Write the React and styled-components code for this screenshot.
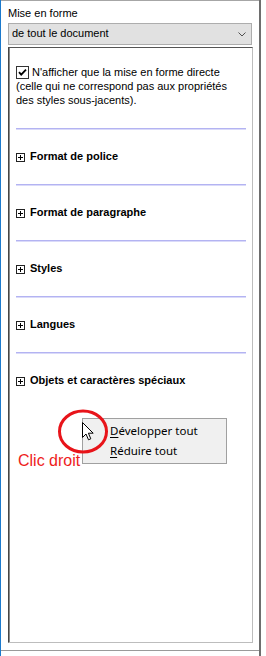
import React from "react";
import styled, { createGlobalStyle } from "styled-components";

const Global = createGlobalStyle`
  html, body { margin: 0; padding: 0; background: #ffffff; }
  body { font-family: "Liberation Sans", Arial, sans-serif; color: #000; }
`;

const Frame = styled.div`
  position: relative;
  box-sizing: border-box;
  width: 261px;
  height: 656px;
  border-left: 1px solid #1b79cc;
  border-right: 2px solid #6e6e6e;
`;

const Panel = styled.div`
  box-sizing: border-box;
  height: 651px;
  border-top: 1px solid #a6a6a6;
  border-bottom: 1px solid #9a9a9a;
  padding: 6px 6px 0 7px;
  display: flex;
  flex-direction: column;
`;

const Label = styled.div`
  font-size: 11px;
  line-height: 13px;
  height: 13px;
  white-space: nowrap;
`;

const Select = styled.div`
  box-sizing: border-box;
  margin-top: 3px;
  margin-right: 1px;
  height: 22px;
  border: 1px solid #adadad;
  background: #e1e1e1;
  padding: 0 3px;
  display: flex;
  align-items: flex-start;
  font-size: 11px;
  line-height: 18px;
`;

const Chevron = styled.svg`
  margin: 8px 2px 0 auto;
  display: block;
`;

const Box = styled.div`
  box-sizing: border-box;
  margin-top: 2px;
  height: 596px;
  border-top: 1px solid #555555;
  border-left: 1px solid #454545;
  border-right: 1px solid #bdbdbd;
  border-bottom: 1px solid #bdbdbd;
  box-shadow: inset 1px 0 0 #8a8a8a;
  padding: 17px 6px 0 7px;
`;

const CheckText = styled.div`
  font-size: 11px;
  line-height: 14px;
  white-space: nowrap;
`;

const CheckBox = styled.svg`
  float: left;
  margin: 1px 3px 0 0;
  display: block;
`;

const Separator = styled.div`
  margin-top: ${(p) => p.$top}px;
  height: 2px;
  border-top: 1px solid #b3b3f2;
  box-sizing: border-box;
  background: #dadaf9;
`;

const Header = styled.div`
  margin: 19px 0 21px;
  height: 14px;
  display: flex;
  align-items: flex-start;
  font-size: 11px;
  line-height: 14px;
  font-weight: bold;
  white-space: nowrap;
`;

const PlusIcon = styled.svg`
  display: block;
  margin: 4px 5px 0 0;
  flex: none;
`;

const Menu = styled.div`
  position: absolute;
  left: 81px;
  top: 418px;
  box-sizing: border-box;
  width: 145px;
  height: 46px;
  border: 1px solid #a0a0a0;
  background: #f0f0f0;
  padding: 1.5px 0 0 27px;
  font-family: "Noto Sans", "Liberation Sans", sans-serif;
  font-size: 11.5px;
  line-height: 20px;
  color: #000;
`;

const MenuItem = styled.div`
  height: 20px;
  white-space: nowrap;
  u {
    text-decoration: underline;
    text-underline-offset: 1.5px;
    text-decoration-thickness: 1px;
  }
`;

const Ring = styled.svg`
  position: absolute;
  left: 56px;
  top: 409px;
  display: block;
`;

const Cursor = styled.svg`
  position: absolute;
  left: 81px;
  top: 422px;
  display: block;
`;

const Note = styled.div`
  position: absolute;
  left: 17px;
  top: 452px;
  font-family: "Liberation Sans", Arial, sans-serif;
  font-size: 16px;
  line-height: 18px;
  color: #ee1c1c;
  white-space: nowrap;
`;

const sections = [
  "Format de police",
  "Format de paragraphe",
  "Styles",
  "Langues",
  "Objets et caractères spéciaux",
];

function Plus() {
  return (
    <PlusIcon width="9" height="9" viewBox="0 0 9 9">
      <rect x="0.5" y="0.5" width="8" height="8" fill="#fff" stroke="#222" />
      <path d="M2 4.5H7M4.5 2V7" stroke="#000" strokeWidth="1" />
    </PlusIcon>
  );
}

export default function App() {
  return (
    <>
      <Global />
      <Frame>
        <Panel>
          <Label>Mise en forme</Label>
          <Select>
            <span>de tout le document</span>
            <Chevron width="8" height="5" viewBox="0 0 8 5">
              <path d="M0.5 0.5L4 4L7.5 0.5" fill="none" stroke="#505050" strokeWidth="1" />
            </Chevron>
          </Select>
          <Box>
            <CheckText>
              <CheckBox width="13" height="13" viewBox="0 0 13 13">
                <rect x="0.5" y="0.5" width="12" height="12" fill="#fff" stroke="#333" />
                <path d="M3 6.2L5.2 8.6L10 3.6" fill="none" stroke="#000" strokeWidth="1.8" />
              </CheckBox>
              N'afficher que la mise en forme directe
              <br />
              (celle qui ne correspond pas aux propriétés
              <br />
              des styles sous-jacents).
            </CheckText>
            {sections.map((s, i) => (
              <React.Fragment key={s}>
                <Separator $top={i === 0 ? 21 : 0} />
                <Header>
                  <Plus />
                  {s}
                </Header>
              </React.Fragment>
            ))}
          </Box>
        </Panel>
        <Menu>
          <MenuItem>
            <u>D</u>évelopper tout
          </MenuItem>
          <MenuItem>
            <u>R</u>éduire tout
          </MenuItem>
        </Menu>
        <Ring width="52" height="46" viewBox="0 0 52 46">
          <ellipse cx="26" cy="22.5" rx="23.5" ry="20.5" fill="none" stroke="#e8141a" strokeWidth="3" />
        </Ring>
        <Cursor width="13" height="19" viewBox="0 0 13 19">
          <path
            d="M0.5 0.5V15.5L4 12L6.5 17.8L8.8 16.8L6.4 11.2H11.2Z"
            fill="#fff"
            stroke="#000"
            strokeWidth="1"
            strokeLinejoin="miter"
          />
        </Cursor>
        <Note>Clic droit</Note>
      </Frame>
    </>
  );
}
